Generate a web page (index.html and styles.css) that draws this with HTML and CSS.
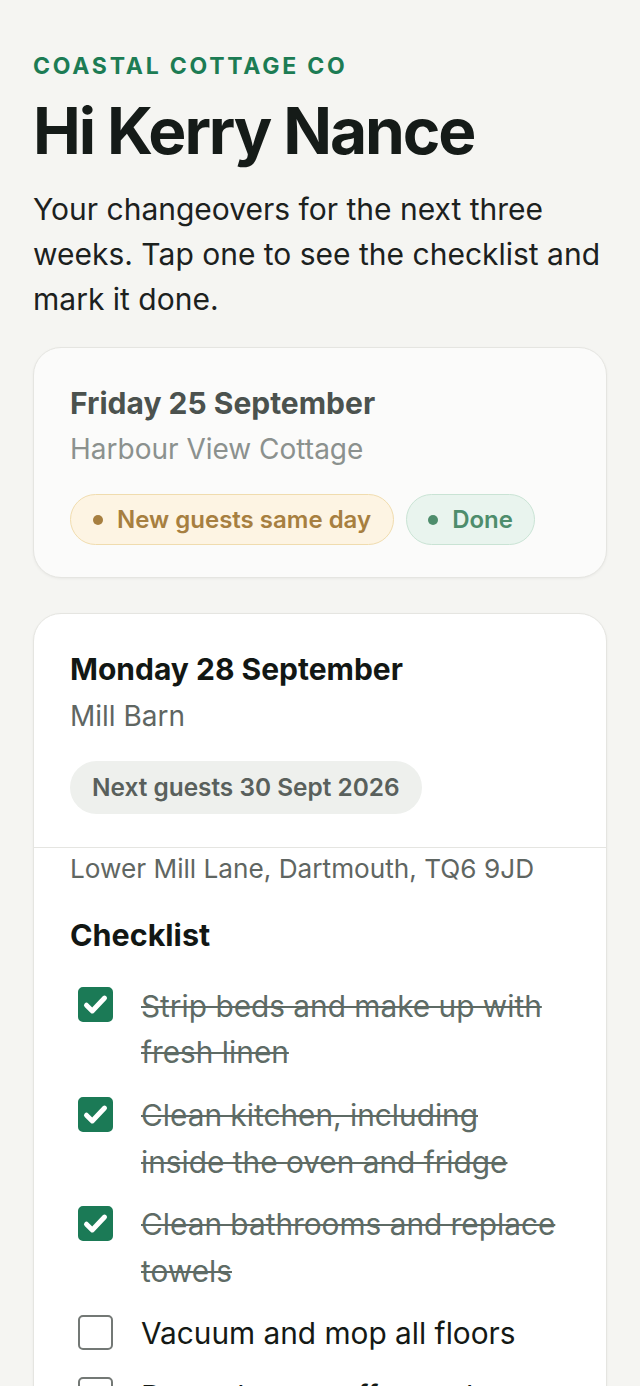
FILE: index.html
```html
<!DOCTYPE html>
<html lang="en">
<head>
<meta charset="utf-8">
<meta name="viewport" content="width=device-width, initial-scale=1">
<title>Changeovers</title>
<link rel="stylesheet" href="styles.css">
</head>
<body>
<main class="page">
  <header class="intro">
    <p class="eyebrow">COASTAL COTTAGE CO</p>
    <h1 class="greeting">Hi Kerry Nance</h1>
    <p class="lede">Your changeovers for the next three weeks. Tap one to see the checklist and mark it done.</p>
  </header>

  <section class="card card-done">
    <div class="card-head">
      <h2 class="card-title">Friday 25 September</h2>
      <p class="card-sub">Harbour View Cottage</p>
      <div class="chips">
        <span class="chip chip-amber"><span class="dot"></span>New guests same day</span>
        <span class="chip chip-green"><span class="dot"></span>Done</span>
      </div>
    </div>
  </section>

  <section class="card card-open">
    <div class="card-head card-head-divided">
      <h2 class="card-title">Monday 28 September</h2>
      <p class="card-sub">Mill Barn</p>
      <div class="chips">
        <span class="chip chip-grey">Next guests 30 Sept 2026</span>
      </div>
    </div>
    <div class="card-body">
      <p class="address">Lower Mill Lane, Dartmouth, TQ6 9JD</p>
      <h3 class="checklist-title">Checklist</h3>
      <ul class="checklist">
        <li class="item done">
          <span class="box checked"><svg viewBox="0 0 24 24" aria-hidden="true"><path d="M5 12.5l4.5 4.5L19 7" /></svg></span>
          <span class="label">Strip beds and make up with fresh linen</span>
        </li>
        <li class="item done">
          <span class="box checked"><svg viewBox="0 0 24 24" aria-hidden="true"><path d="M5 12.5l4.5 4.5L19 7" /></svg></span>
          <span class="label">Clean kitchen, including inside the oven and fridge</span>
        </li>
        <li class="item done">
          <span class="box checked"><svg viewBox="0 0 24 24" aria-hidden="true"><path d="M5 12.5l4.5 4.5L19 7" /></svg></span>
          <span class="label">Clean bathrooms and replace towels</span>
        </li>
        <li class="item">
          <span class="box"></span>
          <span class="label">Vacuum and mop all floors</span>
        </li>
        <li class="item">
          <span class="box"></span>
          <span class="label">Restock tea, coffee and welcome basket</span>
        </li>
      </ul>
    </div>
  </section>
</main>
</body>
</html>
```

FILE: styles.css
```css
* { box-sizing: border-box; }

html, body {
  margin: 0;
  padding: 0;
  background: #f5f5f2;
}

body {
  font-family: Inter, "Noto Sans", "Liberation Sans", sans-serif;
  color: #161b18;
}

.page {
  padding: 52px 33px 40px;
}

.intro {
  display: flex;
  flex-direction: column;
}

.eyebrow {
  margin: 0;
  font-size: 23px;
  line-height: 28px;
  font-weight: 700;
  letter-spacing: 0.12em;
  color: #1c7c54;
}

.greeting {
  margin: 15px 0 0;
  font-size: 64px;
  line-height: 72px;
  font-weight: 700;
  letter-spacing: -0.033em;
  color: #151b18;
}

.lede {
  margin: 20px 0 0;
  font-size: 30px;
  line-height: 45px;
  color: #1c211e;
}

.card {
  margin-top: 25px;
  background: #ffffff;
  border: 1px solid #e5e5e1;
  border-radius: 28px;
  box-shadow: 0 1px 3px rgba(0, 0, 0, 0.05);
  overflow: hidden;
}

.card + .card {
  margin-top: 35px;
}

.card-head {
  padding: 37px 36px 32px;
  display: flex;
  flex-direction: column;
  align-items: flex-start;
}

.card-head-divided {
  padding-bottom: 33px;
  border-bottom: 1px solid #e5e5e1;
}

.card-title {
  margin: 0;
  font-size: 30px;
  line-height: 36.4px;
  font-weight: 700;
  color: #121714;
}

.card-sub {
  margin: 10px 0 0;
  font-size: 28px;
  line-height: 36px;
  color: #5f6662;
}

.chips {
  margin-top: 27px;
  display: flex;
  gap: 12px;
}

.chip {
  display: inline-flex;
  align-items: center;
  gap: 14px;
  height: 52px;
  padding: 0 22px;
  border-radius: 999px;
  font-size: 24px;
  font-weight: 600;
  white-space: nowrap;
}

.dot {
  width: 10px;
  height: 10px;
  border-radius: 50%;
  background: currentColor;
}

.chip-amber {
  height: 51px;
  background: #fdf4e3;
  border: 1.5px solid #f0dcae;
  color: #a77f40;
}

.chip-green {
  height: 51px;
  padding: 0 21px;
  background: #e9f4ee;
  border: 1.5px solid #c9e3d4;
  color: #4e8d6c;
}

.chip-grey {
  height: 53px;
  background: #eef0ed;
  color: #59605c;
  font-size: 24.4px;
}

.card-done {
  background: #fbfbfa;
}

.card-done .card-title { color: #4b524e; }
.card-done .card-sub { color: #8b918e; }

.card-body {
  padding: 3px 36px 40px;
}

.address {
  margin: 0;
  font-size: 26.2px;
  line-height: 36px;
  color: #5f6662;
}

.checklist-title {
  margin: 28px 0 0;
  font-size: 30.5px;
  line-height: 40px;
  font-weight: 700;
  color: #121714;
}

.checklist {
  list-style: none;
  margin: 28px 0 0;
  padding: 0;
  display: flex;
  flex-direction: column;
  gap: 16px;
}

.item {
  display: flex;
  align-items: flex-start;
  gap: 28px;
  padding: 0 8px;
}

.box {
  flex: none;
  width: 35px;
  height: 35px;
  margin-top: 4.5px;
  border: 2px solid #737875;
  border-radius: 5px;
  background: #fff;
  display: flex;
  align-items: center;
  justify-content: center;
}

.box.checked {
  background: #1b7a56;
  border-color: #1b7a56;
}

.box svg {
  width: 31px;
  height: 31px;
  fill: none;
  stroke: #ffffff;
  stroke-width: 3.8;
  stroke-linecap: round;
  stroke-linejoin: round;
}

.label {
  font-size: 29.8px;
  line-height: 46.6px;
  color: #141915;
}

.item.done .label {
  color: #5e6b65;
  text-decoration: line-through;
  text-decoration-thickness: 2px;
}
```
